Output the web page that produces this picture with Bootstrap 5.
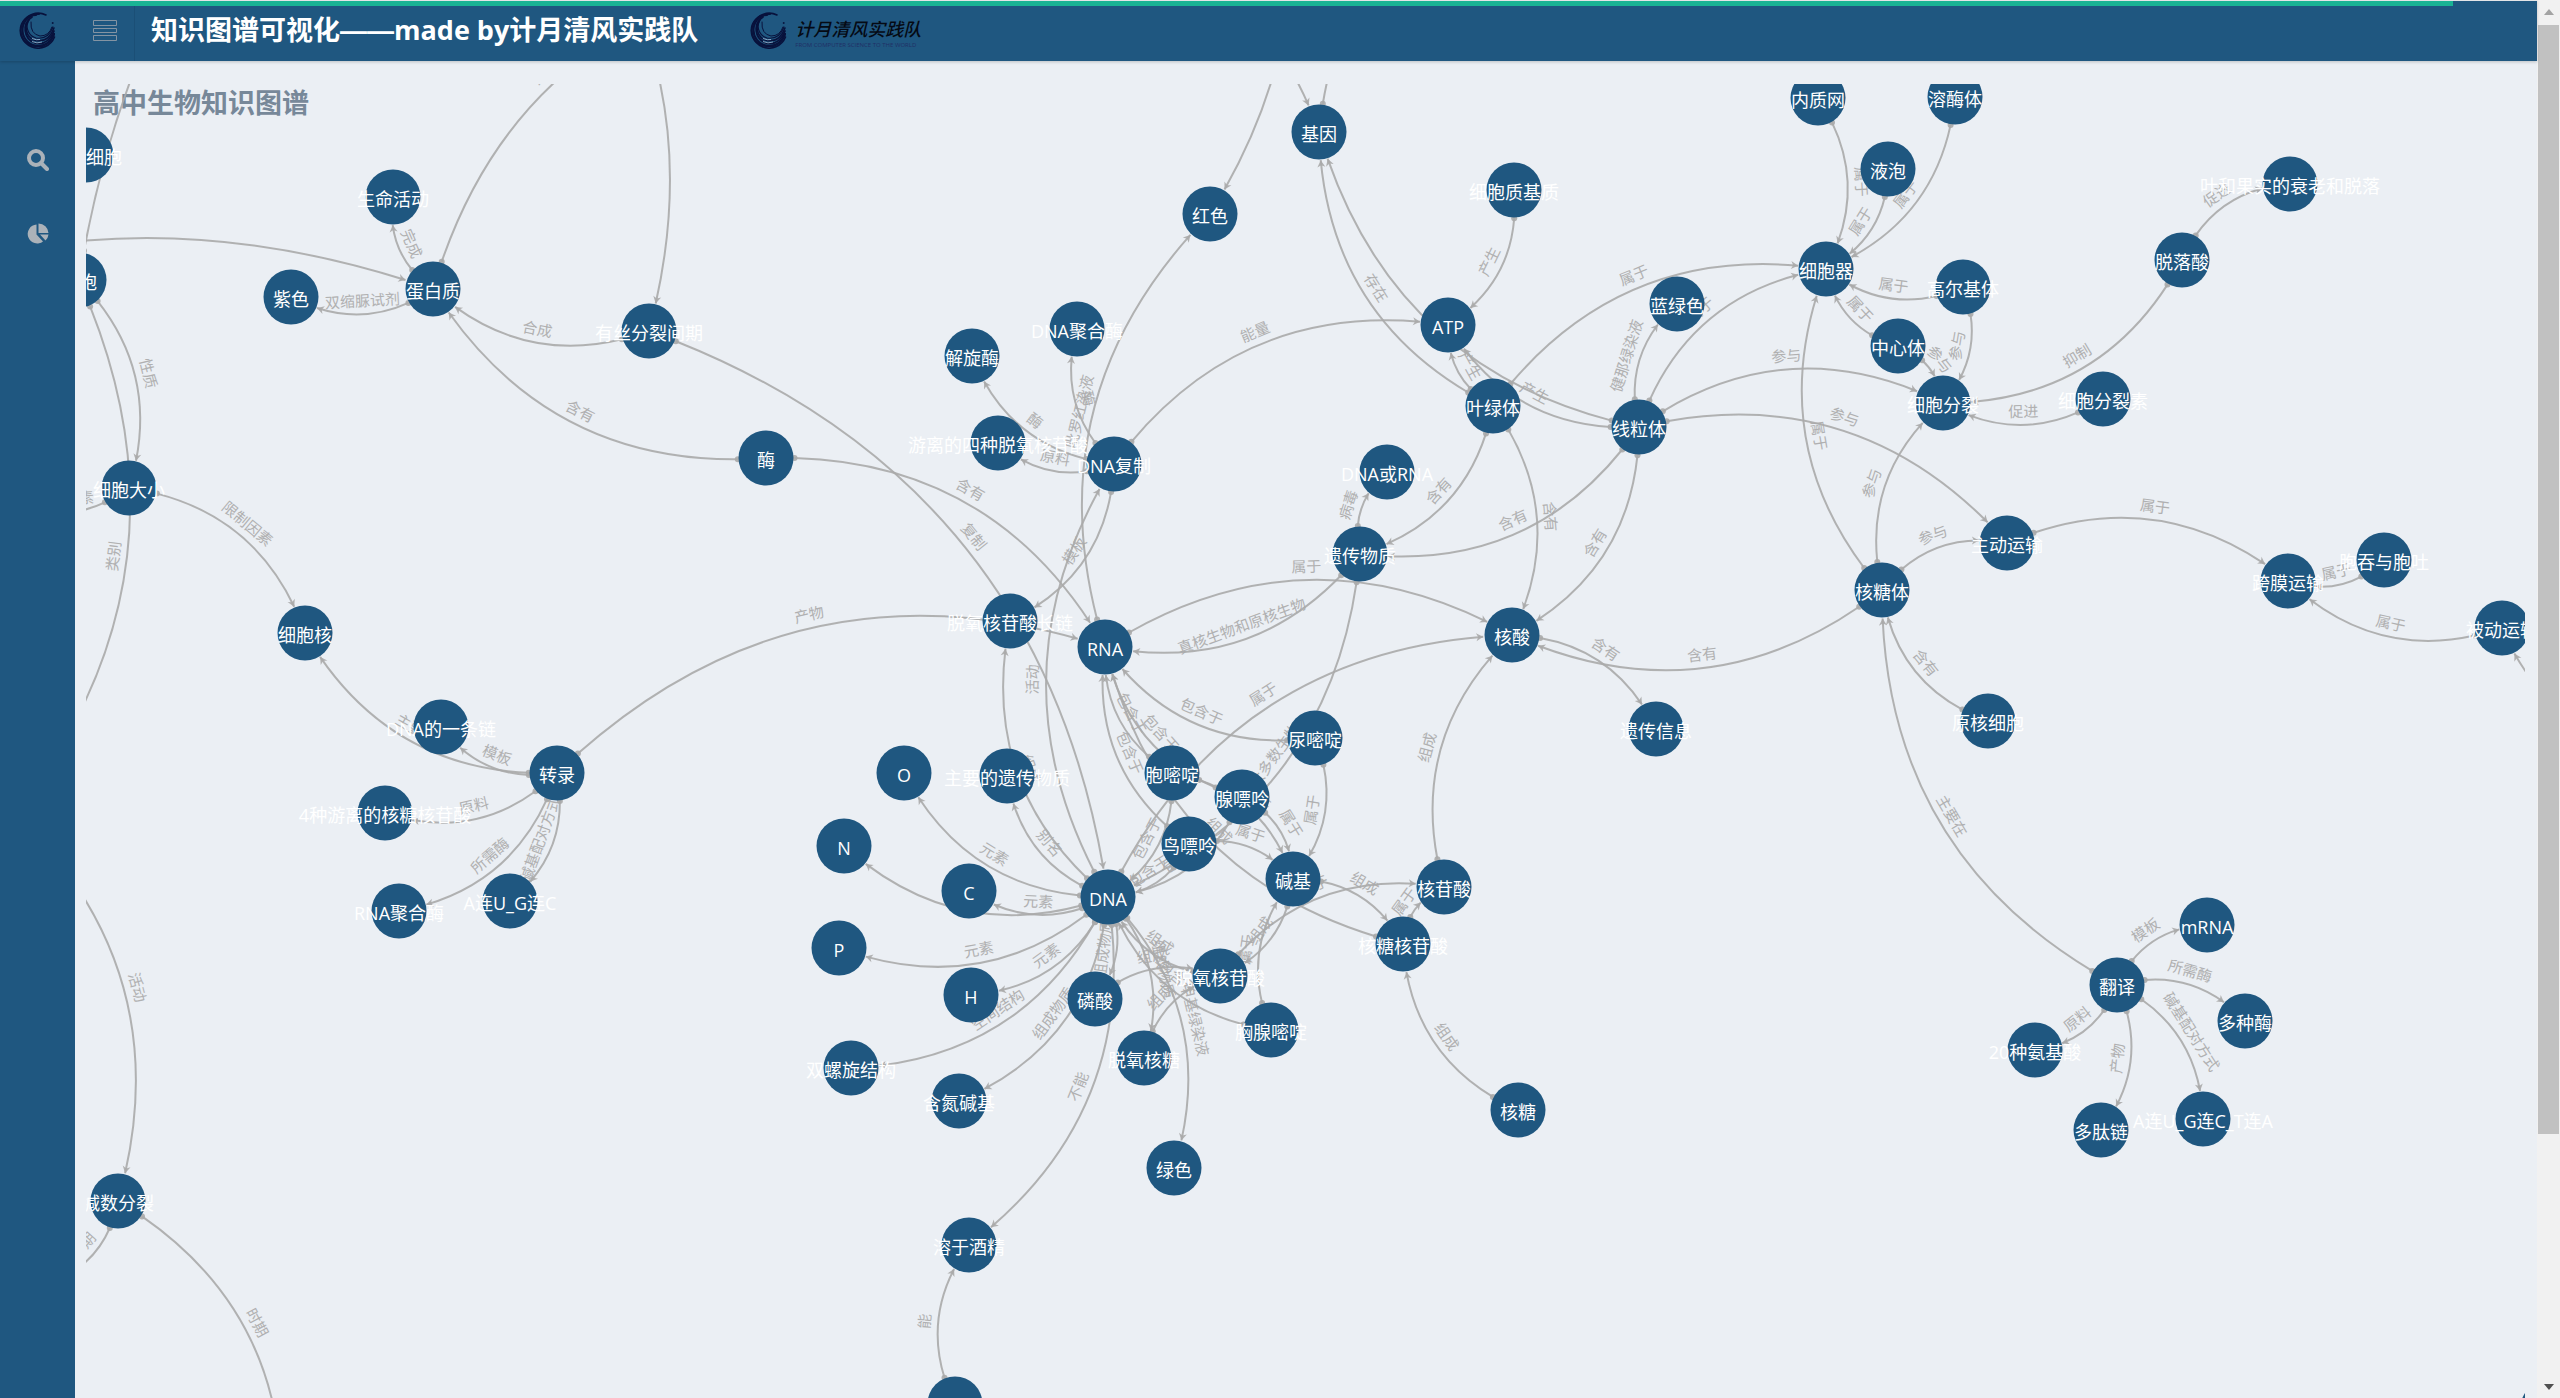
<!DOCTYPE html>
<html lang="zh-CN">
<head>
<meta charset="utf-8">
<meta name="viewport" content="width=device-width, initial-scale=1">
<title>知识图谱可视化</title>
<link rel="stylesheet" href="https://cdn.jsdelivr.net/npm/bootstrap@5.3.0/dist/css/bootstrap.min.css">
<style>
  :root { --ink: #1f5780; --paper: #ebeff4; --line: #aaaaaa; }
  body { font-family: "Open Sans", "Noto Sans CJK SC", sans-serif; background: var(--paper); }
  .topbar { height: 61px; background: var(--ink); box-shadow: 0 1px 3px rgba(0,0,0,.2); z-index: 2; }
  .pace-strip { top: 0; left: 0; right: 0; height: 6px; border-top: 1px solid #e3e5e7; }
  .pace-fill { height: 5px; width: 96.7%; background: #1ab394; }
  .brand-cell { width: 75px; }
  .menu-cell { width: 60px; border-right: 1px solid #1b4f76 !important; border-radius: 0; }
  .site-title { font-size: 27px; line-height: 36px; }
  .site-title .dash { font-family: "Liberation Sans", sans-serif; }
  .team-name { font-size: 18px; line-height: 24px; font-style: italic; font-weight: 500; color: #050a14; }
  .team-motto { font-size: 6px; line-height: 8px; color: #1f2f66; }
  .sidebar { width: 75px; padding-top: 85px; gap: 50px; background: var(--ink); }
  .side-link { height: 24px; color: #abb2b9; }
  .graph-wrap { padding: 23px 12px 0 11px; }
  .graph { display: block; width: 100%; height: 100%; overflow: hidden; }
  .graph-title { font-size: 27px; font-weight: 700; fill: #778899; }
  .edge { fill: none; stroke: var(--line); stroke-width: 2; opacity: .9; }
  .mark-end { fill: var(--line); opacity: .9; }
  .edge-text { font-size: 15px; fill: var(--line); text-anchor: middle; opacity: .9; }
  .node-dot { fill: var(--ink); }
  .node-text { font-size: 18px; fill: #fff; text-anchor: middle; }
  .scroll-track { width: 23px; background: #f1f1f1; padding-left: 1px; }
  .scroll-cap { height: 23px; }
  .scroll-thumb { flex: 0 0 82%; background: #c1c1c1; margin: 2px 1px 0 0; }
</style>
</head>
<body>
<svg width="0" height="0" class="position-absolute">
  <symbol id="crescent" viewBox="0 0 37 37">
    <g fill="none" stroke="#08123c" stroke-linecap="round">
      <path stroke-width="1.6" d="M27 3A17.500 17.500 0 1 0 35.500 25"/>
      <path stroke-width="2" d="M20 2A16 16 0 1 0 35 22"/>
      <path stroke-width="2" d="M17 3A15 15 0 0 0 17 34Q29 36 35 22"/>
      <path stroke-width="1.800" d="M13 5A14.500 14.500 0 0 0 16 31Q29 34 35 19"/>
      <path stroke-width="1.500" d="M10 8A13 13 0 0 0 15 28Q29 32 35 16"/>
      <path stroke-width="1.200" d="M9 10A12 12 0 0 0 17 26Q29 28 34 15"/>
      <path stroke-width="1" d="M12 10Q11 22 21 24Q30 24 33 15"/>
      <circle cx="33.500" cy="11" r=".5"/>
    </g>
    <path d="M13 29.500Q18 32 23 30M13 26.500Q18 28.500 21 27.500" fill="none" stroke="#8fb0cc" stroke-width=".9"/>
  </symbol>
</svg>
<div class="d-flex vh-100 overflow-hidden">
  <div class="d-flex flex-column flex-grow-1" style="min-width:0">
    <header class="topbar d-flex align-items-stretch position-relative flex-shrink-0">
      <div class="pace-strip position-absolute"><div class="pace-fill"></div></div>
      <a href="#" class="brand-cell d-flex align-items-center justify-content-center" aria-label="首页"><svg width="37" height="37"><use href="#crescent"/></svg></a>
      <button type="button" class="menu-cell btn p-0 border-0 d-flex align-items-center justify-content-center" aria-label="菜单">
        <svg width="24" height="22" fill="none" stroke="#8494a3" stroke-width="1"><path d="M.5 .5h23v5h-23zM.5 8.500h23v4h-23zM.5 15.500h23v5h-23z"/></svg>
      </button>
      <h1 class="site-title fw-bold text-white mb-0 ms-3 align-self-center">知识图谱可视化<span class="dash">——</span>made by计月清风实践队</h1>
      <div class="d-flex align-items-center ms-5 ps-1">
        <svg width="37" height="37"><use href="#crescent"/></svg>
        <div class="ms-2 pt-1 text-nowrap">
          <div class="team-name">计月清风实践队</div>
          <div class="team-motto">FROM COMPUTER SCIENCE TO THE WORLD</div>
        </div>
      </div>
    </header>
    <div class="d-flex flex-grow-1" style="min-height:0">
      <nav class="sidebar flex-shrink-0 d-flex flex-column align-items-center">
        <a href="#" class="side-link" aria-label="搜索"><svg width="22" height="22" fill="none" stroke="currentColor"><circle cx="9" cy="9" r="7" stroke-width="4"/><path d="M14 14l6 6" stroke-width="4" stroke-linecap="round"/></svg></a>
        <a href="#" class="side-link" aria-label="图表"><svg width="22" height="22" fill="currentColor"><path d="M9.500 1.500A9.500 9.500 0 1 0 16 18.500L9.500 11.500zM11.500 .5V10H21.500A10 10 0 0 0 11.500 .5zM13 11.500H21.500A10 10 0 0 1 18.500 17.500z"/></svg></a>
      </nav>
      <main class="graph-wrap flex-grow-1" style="min-width:0">
        <svg class="graph" id="graph" role="img" aria-label="高中生物知识图谱">
          <g transform="translate(-86 -84)">
            <text class="graph-title" x="93" y="113">高中生物知识图谱</text>
            <g id="edges"></g><g id="nodes"></g>
          </g>
        </svg>
      </main>
    </div>
  </div>
  <div class="scroll-track d-flex flex-column flex-shrink-0" aria-hidden="true">
    <div class="scroll-cap d-flex align-items-center justify-content-center"><svg width="10" height="6"><path d="M0 6L5 0L10 6z" fill="#a3a3a3"/></svg></div>
    <div class="flex-grow-1 d-flex flex-column"><div class="scroll-thumb"></div></div>
    <div class="scroll-cap d-flex align-items-center justify-content-center"><svg width="10" height="6"><path d="M0 0L5 6L10 0z" fill="#505050"/></svg></div>
  </div>
</div>
<script src="https://cdn.jsdelivr.net/npm/bootstrap@5.3.0/dist/js/bootstrap.bundle.min.js"></script>
<script>
// id: [x, y, label]; ids beginning with "_" lie outside the visible area
const nodes = {
  zh:[86,155,'真核细胞'], xb:[79,280,'细胞'], sm:[393,197,'生命活动'], dbz:[433,289,'蛋白质'], zs:[291,297,'紫色'],
  ys:[649,331,'有丝分裂间期'], mei:[766,458,'酶'], dx:[129,488,'细胞大小'], xbh:[305,633,'细胞核'],
  ytl:[441,727,'DNA的一条链'], zl:[557,773,'转录'], sz:[385,813,'4种游离的核糖核苷酸'], rjh:[399,911,'RNA聚合酶'],
  au:[510,901,'A连U_G连C'], jy:[1319,132,'基因'], hs:[1210,214,'红色'], djh:[1077,329,'DNA聚合酶'], jx:[972,356,'解旋酶'],
  yl4:[998,443,'游离的四种脱氧核苷酸'], fz:[1114,464,'DNA复制'], dhr:[1387,472,'DNA或RNA'], yc:[1360,554,'遗传物质'],
  cl:[1010,621,'脱氧核苷酸长链'], rna:[1105,647,'RNA'], nmd:[1315,738,'尿嘧啶'], o:[904,773,'O'], zy:[1007,776,'主要的遗传物质'],
  bmd:[1172,773,'胞嘧啶'], xpl:[1242,797,'腺嘌呤'], npl:[1189,844,'鸟嘌呤'], jj:[1293,879,'碱基'], hgs:[1444,887,'核苷酸'],
  n:[844,846,'N'], c:[969,891,'C'], dna:[1108,897,'DNA'], p:[839,948,'P'], h:[971,995,'H'], ls:[1095,999,'磷酸'],
  tyg:[1220,976,'脱氧核苷酸'], htg:[1403,944,'核糖核苷酸'], slx:[851,1068,'双螺旋结构'], hd:[959,1101,'含氮碱基'],
  tyt:[1144,1058,'脱氧核糖'], xxm:[1271,1030,'胸腺嘧啶'], lv:[1174,1168,'绿色'], ht:[1518,1110,'核糖'], jiu:[969,1245,'溶于酒精'],
  bt:[955,1404,''], zj:[1514,190,'细胞质基质'], atp:[1448,325,'ATP'], ylt:[1493,406,'叶绿体'], xlt:[1639,427,'线粒体'],
  lls:[1677,304,'蓝绿色'], xbq:[1826,269,'细胞器'], nzw:[1818,98,'内质网'], yp:[1888,169,'液泡'], zxt:[1898,346,'中心体'],
  rmt:[1955,97,'溶酶体'], ygs:[2290,184,'叶和果实的衰老和脱落'], tls:[2182,260,'脱落酸'], gej:[1963,287,'高尔基体'],
  fl:[1943,403,'细胞分裂'], fls:[2103,399,'细胞分裂素'], zd:[2007,543,'主动运输'], htt:[1882,590,'核糖体'], km:[2288,581,'跨膜运输'],
  bt2:[2384,560,'胞吞与胞吐'], bd:[2502,628,'被动运输'], hsn:[1512,635,'核酸'], ycx:[1656,729,'遗传信息'], yh:[1988,721,'原核细胞'],
  fy:[2117,985,'翻译'], mr:[2207,925,'mRNA'], dzm:[2245,1021,'多种酶'], auct:[2203,1119,'A连U_G连C_T连A'],
  aj:[2035,1050,'20种氨基酸'], dtl:[2101,1130,'多肽链'], js:[118,1201,'减数分裂'],
  _a:[771,-24], _b:[502,-182], _c:[-382,462], _d:[667,-420], _e:[14,816], _f:[-2,499], _g:[14,812], _h:[281,1506],
  _i:[42,1286], _j:[1079,-68], _k:[1545,-168], _l:[1218,-300], _m:[2660,745], _n:[2548,1408]
};
// source target label
const links = `dbz sm 完成|dbz zs 双缩脲试剂|ys dbz 合成|mei dbz 含有|dbz _a 组成|_b ys|_c dbz|xb _d|xb dx 性质|xb _e 类别|dx _f 限制因素
_g js 活动|js _h 时期|js _i 时期|dx xbh 限制因素|zl xbh 主要在|zl ytl 模板|zl sz 原料|zl rjh 所需酶|zl au 碱基配对方式|zl rna 产物
ys dna 复制|mei rna 含有|fz jx 酶|fz djh 酶|fz yl4 原料|fz atp 能量|fz cl 模板|dna fz 活动|dna zy 别名|dna cl 组成|dna o 元素|dna n 元素
dna c 元素|dna p 元素|dna h 元素|dna slx 空间结构|dna hd 组成物质|dna ls 组成物质|dna tyt 组成物质|dna lv 甲基绿染液|dna jiu 不能
rna hs 吡罗红染液|bt jiu 能|rna hsn 属于|yc rna 真核生物和原核生物|yc dhr 病毒|yc dna 大多数生物|nmd rna 包含于|bmd rna 包含于
xpl rna 包含于|npl rna 包含于|nmd jj 属于|xpl jj 属于|bmd jj 属于|npl jj 属于|bmd dna 包含于|xpl dna 包含于|npl dna 包含于|xxm dna 包含于
xxm jj 属于|dna hsn 属于|jj htg 组成|jj tyg 组成|ls tyg 组成|tyt tyg 组成|ht htg 组成|htg rna 组成|tyg dna 组成|tyg hgs 属于|htg hgs 属于
hgs hsn 组成|hsn ycx 含有|htt hsn 含有|xlt hsn 含有|ylt hsn 含有|ylt yc 含有|xlt yc 含有|htt xbq 属于|yh htt 含有|fy htt 主要在
htt fl 参与|htt zd 参与|xlt fl 参与|xlt zd 参与|xlt xbq 属于|ylt xbq 属于|xlt lls 健那绿染液|xlt atp 产生|ylt atp 产生|zj atp 产生
ylt jy 存在|xlt jy 存在|_j jy|jy _k|_l hs|zd km 属于|bt2 km 属于|bd km 属于|_m bd|gej xbq 属于|gej fl 参与|zxt xbq 属于|zxt fl 参与
nzw xbq 属于|yp xbq 属于|rmt xbq 属于|tls fl 抑制|fls fl 促进|tls ygs 促进|fy mr 模板|fy dzm 所需酶|fy auct 碱基配对方式|fy aj 原料|fy dtl 产物`
  .split(/[|\n]/).map(s => s.trim().split(' '));

const R = 28, CURVE = 0.3, NS = 'http://www.w3.org/2000/svg';
function add(parent, tag, attrs, text) {
  const el = document.createElementNS(NS, tag);
  for (const k in attrs) el.setAttribute(k, attrs[k]);
  if (text) el.textContent = text;
  parent.appendChild(el);
}
const mix = (a, b, t) => [a[0] + (b[0] - a[0]) * t, a[1] + (b[1] - a[1]) * t];
const edgeLayer = document.getElementById('edges'), nodeLayer = document.getElementById('nodes');
for (const [s, e, label] of links) {
  const a = nodes[s], b = nodes[e], dx = b[0] - a[0], dy = b[1] - a[1];
  const m = [(a[0] + b[0]) / 2 + dy * CURVE, (a[1] + b[1]) / 2 - dx * CURVE];
  const at = t => mix(mix(a, m, t), mix(m, b, t), t);
  const tan = t => { const p = mix(a, m, t), q = mix(m, b, t); return [q[0] - p[0], q[1] - p[1]]; };
  let t0 = 0, t1 = 1;
  while (Math.hypot(at(t0)[0] - a[0], at(t0)[1] - a[1]) < R) t0 += 0.002;
  while (Math.hypot(at(t1)[0] - b[0], at(t1)[1] - b[1]) < R) t1 -= 0.002;
  // sub-curve between the two node rims
  const p0 = at(t0), p2 = at(t1), p1 = mix(mix(a, m, t0), mix(m, b, t0), t1);
  const f = v => v.map(n => n.toFixed(1)).join(' ');
  add(edgeLayer, 'path', { class: 'edge', d: `M${f(p0)}Q${f(p1)} ${f(p2)}` });
  add(edgeLayer, 'circle', { class: 'mark-end', cx: p0[0].toFixed(1), cy: p0[1].toFixed(1), r: 3 });
  const g = tan(t1), ang = Math.atan2(g[1], g[0]) * 180 / Math.PI;
  add(edgeLayer, 'path', { class: 'mark-end', d: 'M0 0L-7 4L-5 0L-7 -4z', transform: `translate(${f(p2)}) rotate(${ang.toFixed(1)})` });
  if (label) {
    const c = at((t0 + t1) / 2), u = tan((t0 + t1) / 2);
    let r = Math.atan2(u[1], u[0]) * 180 / Math.PI;
    if (dx < 0) r += 180;
    add(edgeLayer, 'text', { class: 'edge-text', y: -8, transform: `translate(${f(c)}) rotate(${r.toFixed(1)})` }, label);
  }
}
for (const id in nodes) {
  const [x, y, label] = nodes[id];
  if (id[0] === '_' && id !== '_n') continue;
  add(nodeLayer, 'circle', { class: 'node-dot', cx: x, cy: y, r: 27.5 });
  if (label) add(nodeLayer, 'text', { class: 'node-text', x: x, y: y + 9 }, label);
}
</script>
</body>
</html>
